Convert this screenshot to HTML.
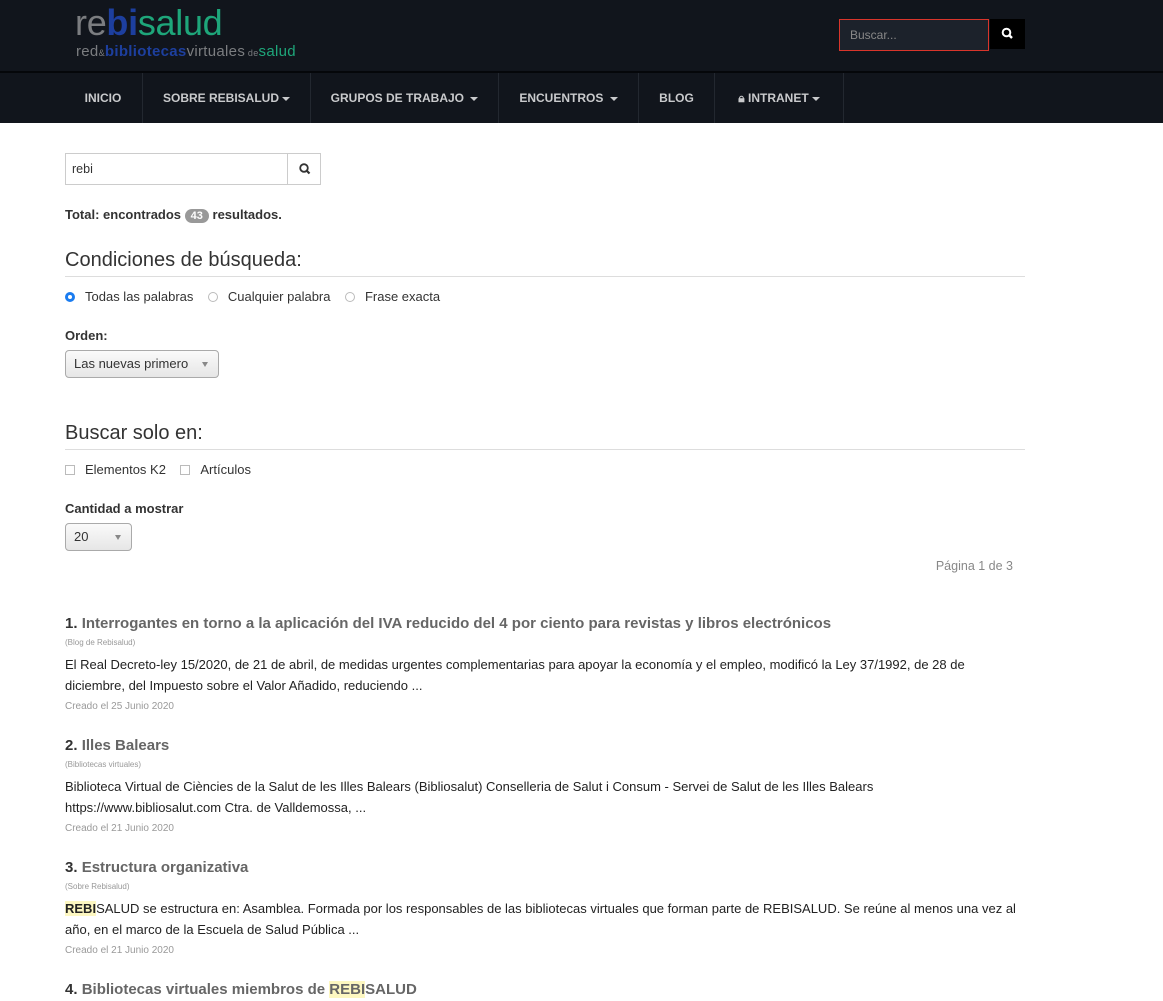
<!DOCTYPE html>
<html><head><meta charset="utf-8"><style>
body{margin:0;font-family:"Liberation Sans",Arial,sans-serif;background:#fff;color:#333;font-size:13px}
.hdr{background:#11151c;height:71px;position:relative;border-bottom:2px solid #05070a}
.logo{position:absolute;left:75px;top:3px;font-size:36px;letter-spacing:-0.3px;line-height:40px}
.logo2{position:absolute;left:76px;top:43px;font-size:15px;letter-spacing:0.3px}
.g{color:#7b7d80}.b{color:#1d3f9e;font-weight:bold}.gr{color:#1ea67a}
.srch{position:absolute;left:839px;top:19px;height:30px;border:1px solid #d9352b;background:#1c222b;color:#888;font-size:12px;line-height:30px;padding-left:10px;width:138px}
.sbtn{position:absolute;left:990px;top:19px;width:35px;height:30px;background:#000}
.nav{background:#11151c;height:50px;position:relative}
.nav span{position:absolute;top:0;height:50px;line-height:50px;color:#c9cacc;font-weight:bold;font-size:12px;text-align:center;border-right:1px solid #232830}
.car{display:inline-block;border-left:4px solid transparent;border-right:4px solid transparent;border-top:4px solid #c9cacc;vertical-align:middle;margin-left:3px}
.c{position:absolute;left:65px;width:960px}
h2{font-weight:normal;font-size:20px;margin:0;color:#333;border-bottom:1px solid #ddd;padding-bottom:4px}
.rad{display:inline-block;width:10px;height:10px;border-radius:50%;border:1px solid #bbb;vertical-align:-1px;margin-right:10px;box-sizing:border-box}
.chk{display:inline-block;width:10px;height:10px;border:1px solid #bbb;vertical-align:-1px;margin-right:10px;box-sizing:border-box}
.sel{border:1px solid #aaa;border-radius:4px;background:linear-gradient(#fafafa,#e6e6e6);height:28px;line-height:26px;padding-left:8px;box-sizing:border-box;position:relative}
.sel:after{content:"";position:absolute;right:10px;top:11px;border-left:3px solid transparent;border-right:3px solid transparent;border-top:5px solid #888}
.r h3{font-size:15px;margin:0;color:#333}
.r h3 a{color:#666}
.cat{font-size:8px;color:#999;margin-top:6px}
.txt{font-size:13px;line-height:21px;margin-top:7px;color:#222}
.date{font-size:10px;color:#999;margin-top:5px}
.hl{background:#fdf7c1}
</style></head><body>
<div class="hdr">
<div class="logo"><span class="g">re</span><span class="b">bi</span><span class="gr">salud</span></div>
<div class="logo2"><span class="g">red</span><span class="g" style="font-size:9px">&amp;</span><span class="b">bibliotecas</span><span class="g">virtuales</span><span class="g" style="font-size:9px"> de</span><span class="gr">salud</span></div>
<div class="srch">Buscar...</div>
<div class="sbtn"><svg width="35" height="30"><circle cx="16.5" cy="13.5" r="3.8" stroke="#fff" stroke-width="2" fill="none"/><line x1="19.5" y1="16.5" x2="22" y2="19" stroke="#fff" stroke-width="2.4"/></svg></div>
</div>
<div class="nav">
<span style="left:64px;width:78px">INICIO</span>
<span style="left:143px;width:167px">SOBRE REBISALUD<i class="car"></i></span>
<span style="left:311px;width:187px">GRUPOS DE TRABAJO <i class="car"></i></span>
<span style="left:499px;width:139px">ENCUENTROS <i class="car"></i></span>
<span style="left:639px;width:75px">BLOG</span>
<span style="left:715px;width:128px">&#128274;&#xFE0E; INTRANET<i class="car"></i></span>
</div>
<div class="c" style="top:153px">
<div style="width:256px;height:32px;border:1px solid #ccc;box-sizing:border-box;position:relative;font-size:12.5px;line-height:30px;padding-left:6px">rebi<div style="position:absolute;left:221px;top:0;width:34px;height:30px;border-left:1px solid #ccc"><svg width="34" height="30"><circle cx="16" cy="14" r="3.8" stroke="#333" stroke-width="1.8" fill="none"/><line x1="19" y1="17" x2="21.5" y2="19.5" stroke="#333" stroke-width="2.2"/></svg></div></div>
</div>
<div class="c" style="top:207px;font-weight:bold;font-size:13px">Total: encontrados <span style="background:#999;color:#fff;border-radius:9px;padding:1px 6px;font-size:11px">43</span> resultados.</div>
<div class="c" style="top:249px"><h2>Condiciones de búsqueda:</h2></div>
<div class="c" style="top:289px;font-size:13px"><span class="rad" style="border:3px solid #1a7cf0"></span>Todas las palabras &nbsp;&nbsp;&nbsp;<span class="rad"></span>Cualquier palabra &nbsp;&nbsp;&nbsp;<span class="rad"></span>Frase exacta</div>
<div class="c" style="top:328px;font-weight:bold;font-size:13px">Orden:</div>
<div class="c" style="top:350px;width:154px"><div class="sel">Las nuevas primero</div></div>
<div class="c" style="top:422px"><h2>Buscar solo en:</h2></div>
<div class="c" style="top:462px;font-size:13px"><span class="chk"></span>Elementos K2 &nbsp;&nbsp;&nbsp;<span class="chk"></span>Artículos</div>
<div class="c" style="top:501px;font-weight:bold;font-size:13px">Cantidad a mostrar</div>
<div class="c" style="top:523px;width:67px"><div class="sel">20</div></div>
<div class="c" style="top:559px;text-align:right;color:#888;font-size:12.5px;width:948px">Página 1 de 3</div>
<div class="c r" style="top:615px"><h3>1. <a>Interrogantes en torno a la aplicación del IVA reducido del 4 por ciento para revistas y libros electrónicos</a></h3><div class="cat">(Blog de Rebisalud)</div><div class="txt">El Real Decreto-ley 15/2020, de 21 de abril, de medidas urgentes complementarias para apoyar la economía y el empleo, modificó la Ley 37/1992, de 28 de diciembre, del Impuesto sobre el Valor Añadido, reduciendo ...</div><div class="date">Creado el 25 Junio 2020</div></div>
<div class="c r" style="top:737px"><h3>2. <a>Illes Balears</a></h3><div class="cat">(Bibliotecas virtuales)</div><div class="txt">Biblioteca Virtual de Ciències de la Salut de les Illes Balears (Bibliosalut) Conselleria de Salut i Consum - Servei de Salut de les Illes Balears https://www.bibliosalut.com Ctra. de Valldemossa, ...</div><div class="date">Creado el 21 Junio 2020</div></div>
<div class="c r" style="top:859px"><h3>3. <a>Estructura organizativa</a></h3><div class="cat">(Sobre Rebisalud)</div><div class="txt"><b class="hl">REBI</b>SALUD se estructura en: Asamblea. Formada por los responsables de las bibliotecas virtuales que forman parte de REBISALUD. Se reúne al menos una vez al año, en el marco de la Escuela de Salud Pública ...</div><div class="date">Creado el 21 Junio 2020</div></div>
<div class="c r" style="top:981px"><h3>4. <a>Bibliotecas virtuales miembros de <span class="hl">REBI</span>SALUD</a></h3></div>
</body></html>
